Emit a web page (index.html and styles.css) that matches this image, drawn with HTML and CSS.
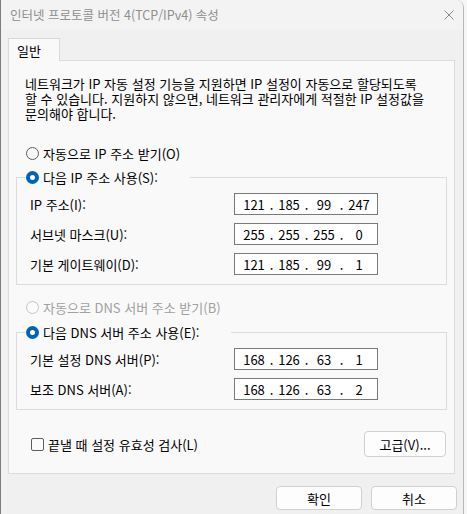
FILE: index.html
```html
<!DOCTYPE html>
<html lang="ko">
<head>
<meta charset="utf-8">
<title>인터넷 프로토콜 버전 4(TCP/IPv4) 속성</title>
<link rel="stylesheet" href="styles.css">
</head>
<body>
<div class="window">
  <div class="titlebar">
    <span class="title">인터넷 프로토콜 버전 4(TCP/IPv4) 속성</span>
    <svg class="close" width="10" height="10" viewBox="0 0 10 10"><path d="M0.5 0.5L9.5 9.5M9.5 0.5L0.5 9.5" stroke="#8a8a8a" stroke-width="1" fill="none"/></svg>
  </div>
  <div class="content">
    <div class="tabs"><div class="tab">일반</div></div>
    <div class="panel">
      <div class="desc">
        <div class="line">네트워크가 IP 자동 설정 기능을 지원하면 IP 설정이 자동으로 할당되도록</div>
        <div class="line">할 수 있습니다. 지원하지 않으면, 네트워크 관리자에게 적절한 IP 설정값을</div>
        <div class="line">문의해야 합니다.</div>
      </div>

      <div class="radio-row first"><span class="radio"></span><span>자동으로 IP 주소 받기(O)</span></div>

      <fieldset class="group">
        <legend><span class="radio on"></span><span>다음 IP 주소 사용(S):</span></legend>
        <div class="row"><span class="lbl">IP 주소(I):</span>
          <div class="ipfield"><span class="seg">121</span><span class="dot">.</span><span class="seg">185</span><span class="dot">.</span><span class="seg">99</span><span class="dot">.</span><span class="seg">247</span></div></div>
        <div class="row"><span class="lbl">서브넷 마스크(U):</span>
          <div class="ipfield"><span class="seg">255</span><span class="dot">.</span><span class="seg">255</span><span class="dot">.</span><span class="seg">255</span><span class="dot">.</span><span class="seg">0</span></div></div>
        <div class="row"><span class="lbl">기본 게이트웨이(D):</span>
          <div class="ipfield"><span class="seg">121</span><span class="dot">.</span><span class="seg">185</span><span class="dot">.</span><span class="seg">99</span><span class="dot">.</span><span class="seg">1</span></div></div>
      </fieldset>

      <div class="radio-row disabled"><span class="radio"></span><span>자동으로 DNS 서버 주소 받기(B)</span></div>

      <fieldset class="group second">
        <legend><span class="radio on"></span><span>다음 DNS 서버 주소 사용(E):</span></legend>
        <div class="row"><span class="lbl">기본 설정 DNS 서버(P):</span>
          <div class="ipfield"><span class="seg">168</span><span class="dot">.</span><span class="seg">126</span><span class="dot">.</span><span class="seg">63</span><span class="dot">.</span><span class="seg">1</span></div></div>
        <div class="row"><span class="lbl">보조 DNS 서버(A):</span>
          <div class="ipfield"><span class="seg">168</span><span class="dot">.</span><span class="seg">126</span><span class="dot">.</span><span class="seg">63</span><span class="dot">.</span><span class="seg">2</span></div></div>
      </fieldset>

      <div class="bottom-row">
        <div class="check-row"><span class="checkbox"></span><span>끝낼 때 설정 유효성 검사(L)</span></div>
        <button class="btn adv">고급(V)...</button>
      </div>
    </div>
    <div class="actions">
      <button class="btn act">확인</button>
      <button class="btn act">취소</button>
    </div>
  </div>
</div>
</body>
</html>
```
FILE: styles.css
```css
* { box-sizing: border-box; }
html, body { margin: 0; padding: 0; }
body {
  width: 467px;
  height: 514px;
  overflow: hidden;
  background: #f6f6f6;
  font-family: "Noto Sans CJK KR", "Noto Sans", sans-serif;
  font-size: 13px;
  color: #000;
}
.window {
  width: 464px;
  height: 514px;
  background: #f0f0f0;
  border-left: 1px solid #7d7d7d;
  border-right: 1px solid #b8b8b8;
  border-top-right-radius: 8px;
  overflow: hidden;
  display: flex;
  flex-direction: column;
}
.titlebar {
  height: 30px;
  flex: none;
  background: #f3f3f3;
  display: flex;
  align-items: center;
  padding: 0 9px 0 9px;
}
.title { color: #8f8f8f; font-size: 12.5px; line-height: 16px; }
.close { margin-left: auto; display: block; }
.content {
  flex: 1;
  display: flex;
  flex-direction: column;
  padding: 8px 8px 0 7px;
}
.tabs { display: flex; height: 22px; }
.tab {
  width: 52px;
  height: 23px;
  padding-left: 8px;
  display: flex;
  align-items: center;
  background: #f9f9f9;
  border: 1px solid #d9d9d9;
  border-bottom: none;
  position: relative;
  z-index: 1;
}
.panel {
  height: 414px;
  background: #f9f9f9;
  border: 1px solid #dcdcdc;
  display: flex;
  flex-direction: column;
}
.desc {
  margin: 15px 0 0 16px;
}
.line {
  height: 15px;
  line-height: 15px;
  white-space: nowrap;
}
.radio-row {
  display: flex;
  align-items: center;
  gap: 4px;
  height: 16px;
  margin-left: 17px;
}
.radio-row.first { margin-top: 24px; }
.radio-row.disabled { margin-top: 14px; color: #a0a0a0; }
.radio {
  width: 13px;
  height: 13px;
  border-radius: 50%;
  border: 1px solid #5e5e5e;
  background: #f7f7f7;
  flex: none;
}
.radio.on {
  border: 4px solid #0063b8;
  background: #fff;
}
.disabled .radio { border-color: #c4c4c4; background: #fbfbfb; }
.group {
  margin: 8px 7px 0 7px;
  width: 431px;
  border: 1px solid #dcdcdc;
  padding: 0 0 9px 13px;
  min-width: 0;
}
.group.second { margin-top: 9px; }
.group legend {
  display: flex;
  align-items: center;
  gap: 4px;
  height: 16px;
  margin-left: -5px;
  padding: 0 32px 0 1px;
}
.row {
  display: flex;
  align-items: center;
  height: 22px;
  margin-top: 8px;
}
.lbl { width: 204px; flex: none; }
.ipfield {
  width: 144px;
  height: 22px;
  border: 1px solid #7a7a7a;
  background: #fff;
  display: flex;
  align-items: center;
  padding-left: 6px;
}
.seg { width: 26px; text-align: center; }
.dot { width: 9px; text-align: center; }
.bottom-row {
  display: flex;
  align-items: center;
  justify-content: space-between;
  margin-top: 21px;
  padding: 0 8px 0 22px;
}
.check-row { display: flex; align-items: center; gap: 4px; }
.checkbox {
  width: 13px;
  height: 13px;
  border: 1px solid #5e5e5e;
  border-radius: 2px;
  background: #fbfbfb;
}
.btn {
  font-family: inherit;
  font-size: 13px;
  color: #000;
  background: #fdfdfd;
  border: 1px solid #d0d0d0;
  border-radius: 4px;
  padding: 0;
}
.adv { width: 82px; height: 26px; }
.actions {
  display: flex;
  justify-content: flex-end;
  gap: 9px;
  margin: 12px -2px 0 0;
}
.act { width: 86px; height: 24px; }
```
